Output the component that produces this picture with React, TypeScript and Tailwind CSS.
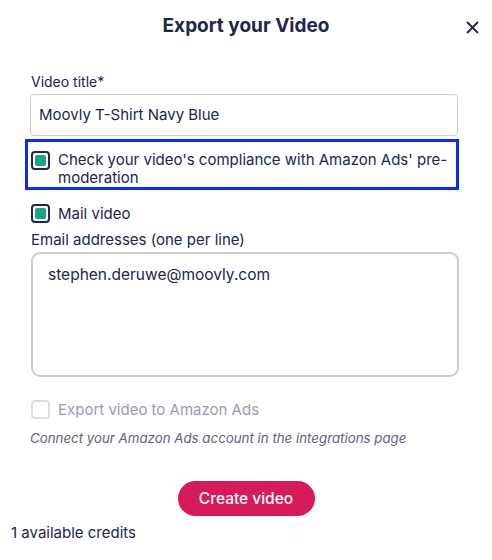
const navy = "text-[#20264f]";

const Check = ({ checked, disabled }: { checked?: boolean; disabled?: boolean }) => (
  <span
    className={
      "flex h-[19px] w-[19px] shrink-0 items-center justify-center rounded-[4px] border-2 " +
      (disabled ? "border-[#dcdde4]" : "border-[#20264f]")
    }
  >
    {checked && <span className="h-[11px] w-[11px] rounded-[2px] bg-[#14a58a]" />}
  </span>
);

export default function App() {
  return (
    <div className={`relative h-[560px] w-[492px] bg-white font-['Inter',sans-serif] ${navy}`}>
      {/* Header */}
      <div className="flex h-[52px] items-center justify-center">
        <h2 className="text-[19px] font-bold">Export your Video</h2>
      </div>
      <button className="absolute left-[466px] top-[21px]">
        <svg width="13" height="13" viewBox="0 0 13 13" stroke="#20264f" strokeWidth="1.8" className="block">
          <path d="M1 1l11 11M12 1L1 12" />
        </svg>
      </button>

      {/* Content */}
      <div className="flex flex-col px-[30px] pt-[20px]">
        <label className="pl-[1px] text-[14px] leading-[20px]">Video title*</label>
        <div className="mt-[2px] flex h-[42px] w-[428px] items-center rounded-[4px] border border-[#cfcfcf] px-[8px] text-[15px]">
          Moovly T-Shirt Navy Blue
        </div>

        <div className="-mx-[5px] mt-[3px] flex w-[434px] gap-[8px] border-[3px] border-[#0a2cf0] pl-[3px] pt-[9px]">
          <Check checked />
          <span className="text-[15px] leading-[18px]">
            <span className="whitespace-nowrap">Check your video's compliance with Amazon Ads' pre-</span>
            <br />
            moderation
          </span>
        </div>

        <div className="mt-[13px] flex items-center gap-[8px] pl-[1px]">
          <Check checked />
          <span className="text-[15px] leading-[21px]">Mail video</span>
        </div>

        <label className="mt-[6px] pl-[1px] text-[15px] leading-[20px]">Email addresses (one per line)</label>
        <div className="ml-[1px] mt-[2px] h-[125px] w-[428px] rounded-[9px] border-2 border-[#cccccc] px-[15px] pt-[10px] text-[15.5px] leading-[21px]">
          stephen.deruwe@moovly.com
        </div>

        <div className="mt-[22px] flex items-center gap-[8px] pl-[1px]">
          <Check disabled />
          <span className="text-[15px] leading-[21px] text-[#9a9cb4]">Export video to Amazon Ads</span>
        </div>
        <p className="mt-[8px] text-[13.3px] italic leading-[20px] text-[#5d6284]">
          Connect your Amazon Ads account in the integrations page
        </p>

        <div className="mt-[33px] flex justify-center">
          <button className="h-[35px] w-[137px] rounded-full bg-[#d71a5b] text-[15.5px] font-medium text-white">
            Create video
          </button>
        </div>
      </div>
      <p className="mt-[7px] pl-[11px] text-[15px] leading-[20px]">1 available credits</p>
    </div>
  );
}
